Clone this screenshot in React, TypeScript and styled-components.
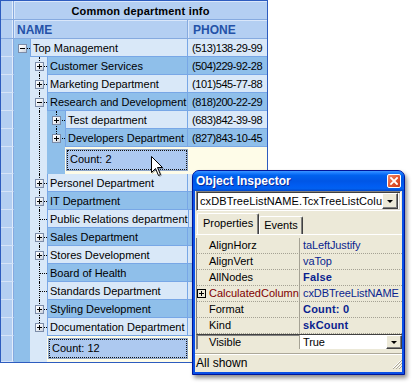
import React from 'react';
import styled, { createGlobalStyle, css } from 'styled-components';

const GlobalStyle = createGlobalStyle`
  html, body {
    margin: 0;
    padding: 0;
    background: #ffffff;
  }
  body {
    font-family: "Liberation Sans", Arial, sans-serif;
    font-size: 11px;
    color: #000;
  }
`;

const LIGHT = '#d9e8f8';
const MID = '#8fbfea';
const GRID_LINE = '#78a7e6';
const CREAM = '#fefce8';
const HEAD = '#b4cff2';

type Line = 'none' | 'tee' | 'corner' | 'through' | 'stub';
type IndentSpec = { bg: string; line?: Line; btn?: '+' | '-' };
type NodeRow = { kind: 'node'; text: string; phone: string; bg: string; indents: IndentSpec[] };
type FooterRow = { kind: 'footer'; text: string; height: number; indents: IndentSpec[] };

const INDENT_W = [16, 17, 18];

const child = (line: Line, btn?: '+' | '-'): IndentSpec[] => [{ bg: MID }, { bg: LIGHT, line, btn }];

const rows: (NodeRow | FooterRow)[] = [
  { kind: 'node', text: 'Top Management', phone: '(513)138-29-99', bg: LIGHT, indents: [{ bg: MID, line: 'stub', btn: '-' }] },
  { kind: 'node', text: 'Customer Services', phone: '(504)229-92-28', bg: MID, indents: child('tee', '+') },
  { kind: 'node', text: 'Marketing Department', phone: '(101)545-77-88', bg: LIGHT, indents: child('tee', '+') },
  { kind: 'node', text: 'Research and Development', phone: '(818)200-22-29', bg: MID, indents: child('tee', '-') },
  { kind: 'node', text: 'Test department', phone: '(683)842-39-98', bg: LIGHT, indents: [{ bg: MID }, { bg: LIGHT, line: 'through' }, { bg: MID, line: 'tee', btn: '+' }] },
  { kind: 'node', text: 'Developers Department', phone: '(827)843-10-45', bg: MID, indents: [{ bg: MID }, { bg: LIGHT, line: 'through' }, { bg: MID, line: 'corner', btn: '+' }] },
  { kind: 'footer', text: 'Count: 2', height: 27, indents: [{ bg: MID }, { bg: LIGHT, line: 'through' }, { bg: MID }] },
  { kind: 'node', text: 'Personel Department', phone: '', bg: LIGHT, indents: child('tee', '+') },
  { kind: 'node', text: 'IT Department', phone: '', bg: MID, indents: child('tee', '+') },
  { kind: 'node', text: 'Public Relations department', phone: '', bg: LIGHT, indents: child('tee') },
  { kind: 'node', text: 'Sales Department', phone: '', bg: MID, indents: child('tee', '+') },
  { kind: 'node', text: 'Stores Development', phone: '', bg: LIGHT, indents: child('tee', '+') },
  { kind: 'node', text: 'Board of Health', phone: '', bg: MID, indents: child('tee') },
  { kind: 'node', text: 'Standards Department', phone: '', bg: LIGHT, indents: child('tee') },
  { kind: 'node', text: 'Styling Development', phone: '', bg: MID, indents: child('tee', '+') },
  { kind: 'node', text: 'Documentation Department', phone: '', bg: LIGHT, indents: child('corner', '+') },
  { kind: 'footer', text: 'Count: 12', height: 26, indents: [{ bg: MID }, { bg: LIGHT }] },
];

const props = [
  { name: 'AlignHorz', value: 'taLeftJustify' },
  { name: 'AlignVert', value: 'vaTop' },
  { name: 'AllNodes', value: 'False', bold: true },
  { name: 'CalculatedColumn', value: 'cxDBTreeListNAME', expand: true },
  { name: 'Format', value: 'Count: 0', bold: true },
  { name: 'Kind', value: 'skCount', bold: true },
  { name: 'Visible', value: 'True', selected: true },
];

const Page = styled.div`
  position: relative;
  width: 414px;
  height: 384px;
  overflow: hidden;
  background: #fff;
`;

/* ---------- tree list ---------- */

const Tree = styled.div`
  width: 268px;
  box-sizing: border-box;
  border: 1px solid #2d5cbf;
  display: flex;
  flex-direction: column;
`;

const TreeRow = styled.div<{ $h?: number }>`
  display: flex;
  height: ${p => p.$h ?? 18}px;
`;

const Indicator = styled.div<{ $head?: boolean }>`
  flex: 0 0 13px;
  box-sizing: border-box;
  background: ${HEAD};
  border-right: 1px solid #86aadf;
  border-bottom: 1px solid ${p => (p.$head ? '#86aadf' : '#d6e4f8')};
  box-shadow: inset -1px 0 #e3edfb;
`;

const BandTitle = styled.div`
  flex: 1;
  box-sizing: border-box;
  background: ${HEAD};
  border-bottom: 1px solid #86aadf;
  box-shadow: inset 1px 1px #dae7fa;
  font-weight: bold;
  font-size: 11px;
  letter-spacing: 0.2px;
  text-align: center;
  line-height: 20px;
`;

const ColHead = styled.div<{ $w?: number }>`
  ${p => (p.$w ? `flex: 0 0 ${p.$w}px; border-right: 1px solid #86aadf;` : 'flex: 1;')}
  box-sizing: border-box;
  background: ${HEAD};
  border-bottom: 1px solid #86aadf;
  box-shadow: inset 1px 1px #dae7fa;
  color: #2452a8;
  font-weight: bold;
  font-size: 12px;
  line-height: 20px;
  padding-left: ${p => (p.$w ? 3 : 5)}px;
`;

const NameArea = styled.div<{ $footer?: boolean }>`
  flex: 0 0 174px;
  display: flex;
  box-sizing: border-box;
  border-right: ${p => (p.$footer ? 'none' : `1px solid ${GRID_LINE}`)};
  background: ${p => (p.$footer ? CREAM : 'transparent')};
`;

const Indent = styled.div<{ $w: number; $c: number; $bg: string; $line: Line }>`
  position: relative;
  flex: 0 0 ${p => p.$w}px;
  box-sizing: border-box;
  display: flex;
  align-items: center;
  padding-left: ${p => p.$c - 4}px;
  background: ${p => p.$bg};
  ${p =>
    (p.$line === 'tee' || p.$line === 'through' || p.$line === 'corner') &&
    css`
      &::before {
        content: '';
        position: absolute;
        left: ${p.$c}px;
        top: 0;
        bottom: ${p.$line === 'corner' ? '50%' : '0'};
        border-left: 1px dotted #000;
      }
    `}
  ${p =>
    (p.$line === 'tee' || p.$line === 'corner' || p.$line === 'stub') &&
    css`
      &::after {
        content: '';
        position: absolute;
        left: ${p.$c}px;
        right: 0;
        top: 50%;
        border-top: 1px dotted #000;
      }
    `}
`;

const ExpandBtn = styled.span<{ $minus?: boolean }>`
  position: relative;
  z-index: 1;
  width: 9px;
  height: 9px;
  box-sizing: border-box;
  border: 1px solid #7c8ca8;
  background: linear-gradient(135deg, #ffffff 0%, #eef1f5 45%, #c8d0dc 100%);
  &::before {
    content: '';
    position: absolute;
    left: 1px;
    top: 3px;
    width: 5px;
    height: 1px;
    background: #000;
  }
  ${p =>
    !p.$minus &&
    css`
      &::after {
        content: '';
        position: absolute;
        left: 3px;
        top: 1px;
        width: 1px;
        height: 5px;
        background: #000;
      }
    `}
`;

const NameCell = styled.div<{ $bg: string }>`
  flex: 1;
  min-width: 0;
  background: ${p => p.$bg};
  border-left: 1px solid ${GRID_LINE};
  border-bottom: 1px solid ${GRID_LINE};
  padding-left: 2px;
  line-height: 18px;
  white-space: nowrap;
  overflow: hidden;
`;

const PhoneCell = styled.div<{ $bg: string }>`
  flex: 1;
  background: ${p => p.$bg};
  border-bottom: 1px solid ${GRID_LINE};
  padding-left: 4px;
  line-height: 18px;
  letter-spacing: -0.4px;
  white-space: nowrap;
  overflow: hidden;
`;

const FooterBox = styled.div`
  flex: 1;
  margin: 3px 1px 4px 2px;
  box-sizing: border-box;
  background: #adc9f0;
  border: 1px dotted #111;
  box-shadow: 0 0 0 1px #8fa6c8;
  padding-left: 2px;
  line-height: 17px;
  white-space: nowrap;
`;

const FooterRest = styled.div`
  flex: 1;
  background: ${CREAM};
`;

const Cursor = styled.svg`
  position: absolute;
  left: 151px;
  top: 156px;
  filter: drop-shadow(1px 1px 0 rgba(0, 0, 0, 0.25));
`;

/* ---------- object inspector ---------- */

const Window = styled.div`
  position: absolute;
  left: 192px;
  top: 170px;
  width: 213px;
  height: 205px;
  box-sizing: border-box;
  display: flex;
  flex-direction: column;
  background: #0a50e6;
  border: 1px solid #00169a;
  border-radius: 7px 7px 0 0;
  box-shadow: 2px 3px 4px rgba(0, 0, 0, 0.45);
`;

const TitleBar = styled.div`
  flex: 0 0 20px;
  display: flex;
  align-items: center;
  justify-content: space-between;
  padding: 0 3px 0 3px;
  border-radius: 6px 6px 0 0;
  background: linear-gradient(
    to bottom,
    #3d95ff 0%,
    #1a7cff 10%,
    #0062ee 22%,
    #0056e6 50%,
    #005df2 75%,
    #0160f0 88%,
    #0046c8 100%
  );
  color: #fff;
  font-weight: bold;
  font-size: 12px;
  text-shadow: 1px 1px #0b2a9a;
`;

const CloseBtn = styled.div`
  width: 14px;
  height: 14px;
  box-sizing: border-box;
  border: 1px solid #fff;
  border-radius: 2px;
  background: linear-gradient(135deg, #f08a6a 0%, #e2552f 55%, #c8391a 100%);
  display: flex;
  align-items: center;
  justify-content: center;
`;

const Client = styled.div`
  flex: 1;
  margin: 0 2px 2px;
  background: #ece9d8;
  display: flex;
  flex-direction: column;
  font-size: 11px;
`;

const Combo = styled.div`
  flex: 0 0 20px;
  margin: 0 1px;
  box-sizing: border-box;
  display: flex;
  align-items: center;
  background: #fff;
  border: 1px solid;
  border-color: #808080 #ffffff #ffffff #808080;
  box-shadow: inset 1px 1px #404040, inset -1px -1px #d4d0c8;
  padding: 0 2px 0 3px;
`;

const ComboText = styled.div`
  flex: 1;
  min-width: 0;
  overflow: hidden;
  white-space: nowrap;
  font-size: 11px;
  letter-spacing: 0.1px;
`;

const DropBtn = styled.div<{ $h?: number }>`
  flex: 0 0 16px;
  height: ${p => p.$h ?? 16}px;
  box-sizing: border-box;
  background: #ece9d8;
  border: 1px solid;
  border-color: #ffffff #404040 #404040 #ffffff;
  box-shadow: inset -1px -1px #808080;
  display: flex;
  align-items: center;
  justify-content: center;
  &::after {
    content: '';
    border-left: 3px solid transparent;
    border-right: 3px solid transparent;
    border-top: 3px solid #000;
  }
`;

const TabStrip = styled.div`
  flex: 0 0 21px;
  margin-top: 2px;
  padding-left: 2px;
  display: flex;
  align-items: flex-end;
`;

const Tab = styled.div<{ $active?: boolean }>`
  box-sizing: border-box;
  height: ${p => (p.$active ? 21 : 18)}px;
  padding: 0 ${p => (p.$active ? 5 : 4)}px;
  border: 1px solid;
  border-bottom: none;
  border-color: #ffffff #404040 #404040 #ffffff;
  box-shadow: inset -1px 0 #808080;
  border-radius: 2px 2px 0 0;
  line-height: ${p => (p.$active ? 19 : 17)}px;
  font-size: 11px;
`;

const PropGrid = styled.div`
  border-top: 1px solid #ffffff;
  padding-top: 3px;
  margin-left: 1px;
  display: flex;
  flex-direction: column;
`;

const PropRow = styled.div<{ $selected?: boolean }>`
  display: grid;
  grid-template-columns: 103px 1fr;
  height: 16px;
  box-sizing: border-box;
  border-left: 1px solid #808080;
  ${p =>
    p.$selected
      ? css`
          border-top: 1px solid #404040;
          box-shadow: inset 1px 0 #808080, inset 0 1px #808080;
          border-bottom: 1px solid #ece9d8;
        `
      : css`
          border-bottom: 1px dotted #a5a294;
        `}
`;

const PropName = styled.div<{ $maroon?: boolean }>`
  position: relative;
  padding-left: 12px;
  border-right: 1px solid #a5a294;
  line-height: 15px;
  white-space: nowrap;
  overflow: hidden;
  font-size: 11px;
  color: ${p => (p.$maroon ? '#800000' : '#000')};
`;

const PlusBox = styled.span`
  position: absolute;
  left: 0;
  top: 3px;
  width: 9px;
  height: 9px;
  box-sizing: border-box;
  border: 1px solid #000;
  &::before {
    content: '';
    position: absolute;
    left: 1px;
    top: 3px;
    width: 5px;
    height: 1px;
    background: #000;
  }
  &::after {
    content: '';
    position: absolute;
    left: 3px;
    top: 1px;
    width: 1px;
    height: 5px;
    background: #000;
  }
`;

const PropValue = styled.div<{ $bold?: boolean; $edit?: boolean }>`
  display: flex;
  align-items: center;
  padding-left: 3px;
  line-height: 15px;
  white-space: nowrap;
  overflow: hidden;
  font-size: 11px;
  letter-spacing: ${p => (p.$bold ? 0.2 : -0.1)}px;
  font-weight: ${p => (p.$bold ? 'bold' : 'normal')};
  color: ${p => (p.$edit ? '#000' : '#0a1f8f')};
  background: ${p => (p.$edit ? '#fff' : 'transparent')};
  & > span {
    flex: 1;
  }
`;

const Spacer = styled.div`
  flex: 1;
`;

const StatusBar = styled.div`
  flex: 0 0 18px;
  display: flex;
  align-items: center;
  justify-content: space-between;
  border-top: 1px solid #aca899;
  box-shadow: inset 0 1px #ffffff;
  padding-left: 1px;
  font-size: 12px;
`;

function TreeList() {
  return (
    <Tree>
      <TreeRow $h={19}>
        <Indicator $head />
        <BandTitle>Common department info</BandTitle>
      </TreeRow>
      <TreeRow $h={19}>
        <Indicator $head />
        <ColHead $w={174}>NAME</ColHead>
        <ColHead>PHONE</ColHead>
      </TreeRow>
      {rows.map((r, i) => {
        const indents = r.indents.map((ind, k) => {
          const w = INDENT_W[k];
          return (
            <Indent key={k} $w={w} $c={Math.ceil(w / 2)} $bg={ind.bg} $line={ind.line ?? 'none'}>
              {ind.btn && <ExpandBtn $minus={ind.btn === '-'} />}
            </Indent>
          );
        });
        if (r.kind === 'footer') {
          return (
            <TreeRow key={i} $h={r.height}>
              <Indicator />
              <NameArea $footer>
                {indents}
                <FooterBox>{r.text}</FooterBox>
              </NameArea>
              <FooterRest />
            </TreeRow>
          );
        }
        return (
          <TreeRow key={i}>
            <Indicator />
            <NameArea>
              {indents}
              <NameCell $bg={r.bg}>{r.text}</NameCell>
            </NameArea>
            <PhoneCell $bg={r.bg}>{r.phone}</PhoneCell>
          </TreeRow>
        );
      })}
    </Tree>
  );
}

function ObjectInspector() {
  return (
    <Window>
      <TitleBar>
        <span>Object Inspector</span>
        <CloseBtn>
          <svg width="8" height="8" viewBox="0 0 8 8">
            <path d="M1 1 L7 7 M7 1 L1 7" stroke="#fff" strokeWidth="1.8" strokeLinecap="square" />
          </svg>
        </CloseBtn>
      </TitleBar>
      <Client>
        <Combo>
          <ComboText>cxDBTreeListNAME.TcxTreeListColumn</ComboText>
          <DropBtn />
        </Combo>
        <TabStrip>
          <Tab $active>Properties</Tab>
          <Tab>Events</Tab>
        </TabStrip>
        <PropGrid>
          {props.map(p => (
            <PropRow key={p.name} $selected={p.selected}>
              <PropName $maroon={p.expand}>
                {p.expand && <PlusBox />}
                {p.name}
              </PropName>
              <PropValue $bold={p.bold} $edit={p.selected}>
                <span>{p.value}</span>
                {p.selected && <DropBtn $h={14} />}
              </PropValue>
            </PropRow>
          ))}
        </PropGrid>
        <Spacer />
        <StatusBar>
          <span>All shown</span>
          <svg width="11" height="11" viewBox="0 0 11 11">
            <path d="M10 2 L2 10 M10 5 L5 10 M10 8 L8 10" stroke="#fff" strokeWidth="1" />
            <path d="M11 2 L2 11 M11 5 L5 11 M11 8 L8 11" stroke="#aca899" strokeWidth="1" />
          </svg>
        </StatusBar>
      </Client>
    </Window>
  );
}

export default function App() {
  return (
    <Page>
      <GlobalStyle />
      <TreeList />
      <Cursor width="13" height="21" viewBox="0 0 13 21">
        <path d="M0.5 0.5 V16.5 L4.5 12.5 L7.5 19.5 L9.5 18.5 L6.5 11.5 H11.5 Z" fill="#fff" stroke="#000" />
      </Cursor>
      <ObjectInspector />
    </Page>
  );
}
